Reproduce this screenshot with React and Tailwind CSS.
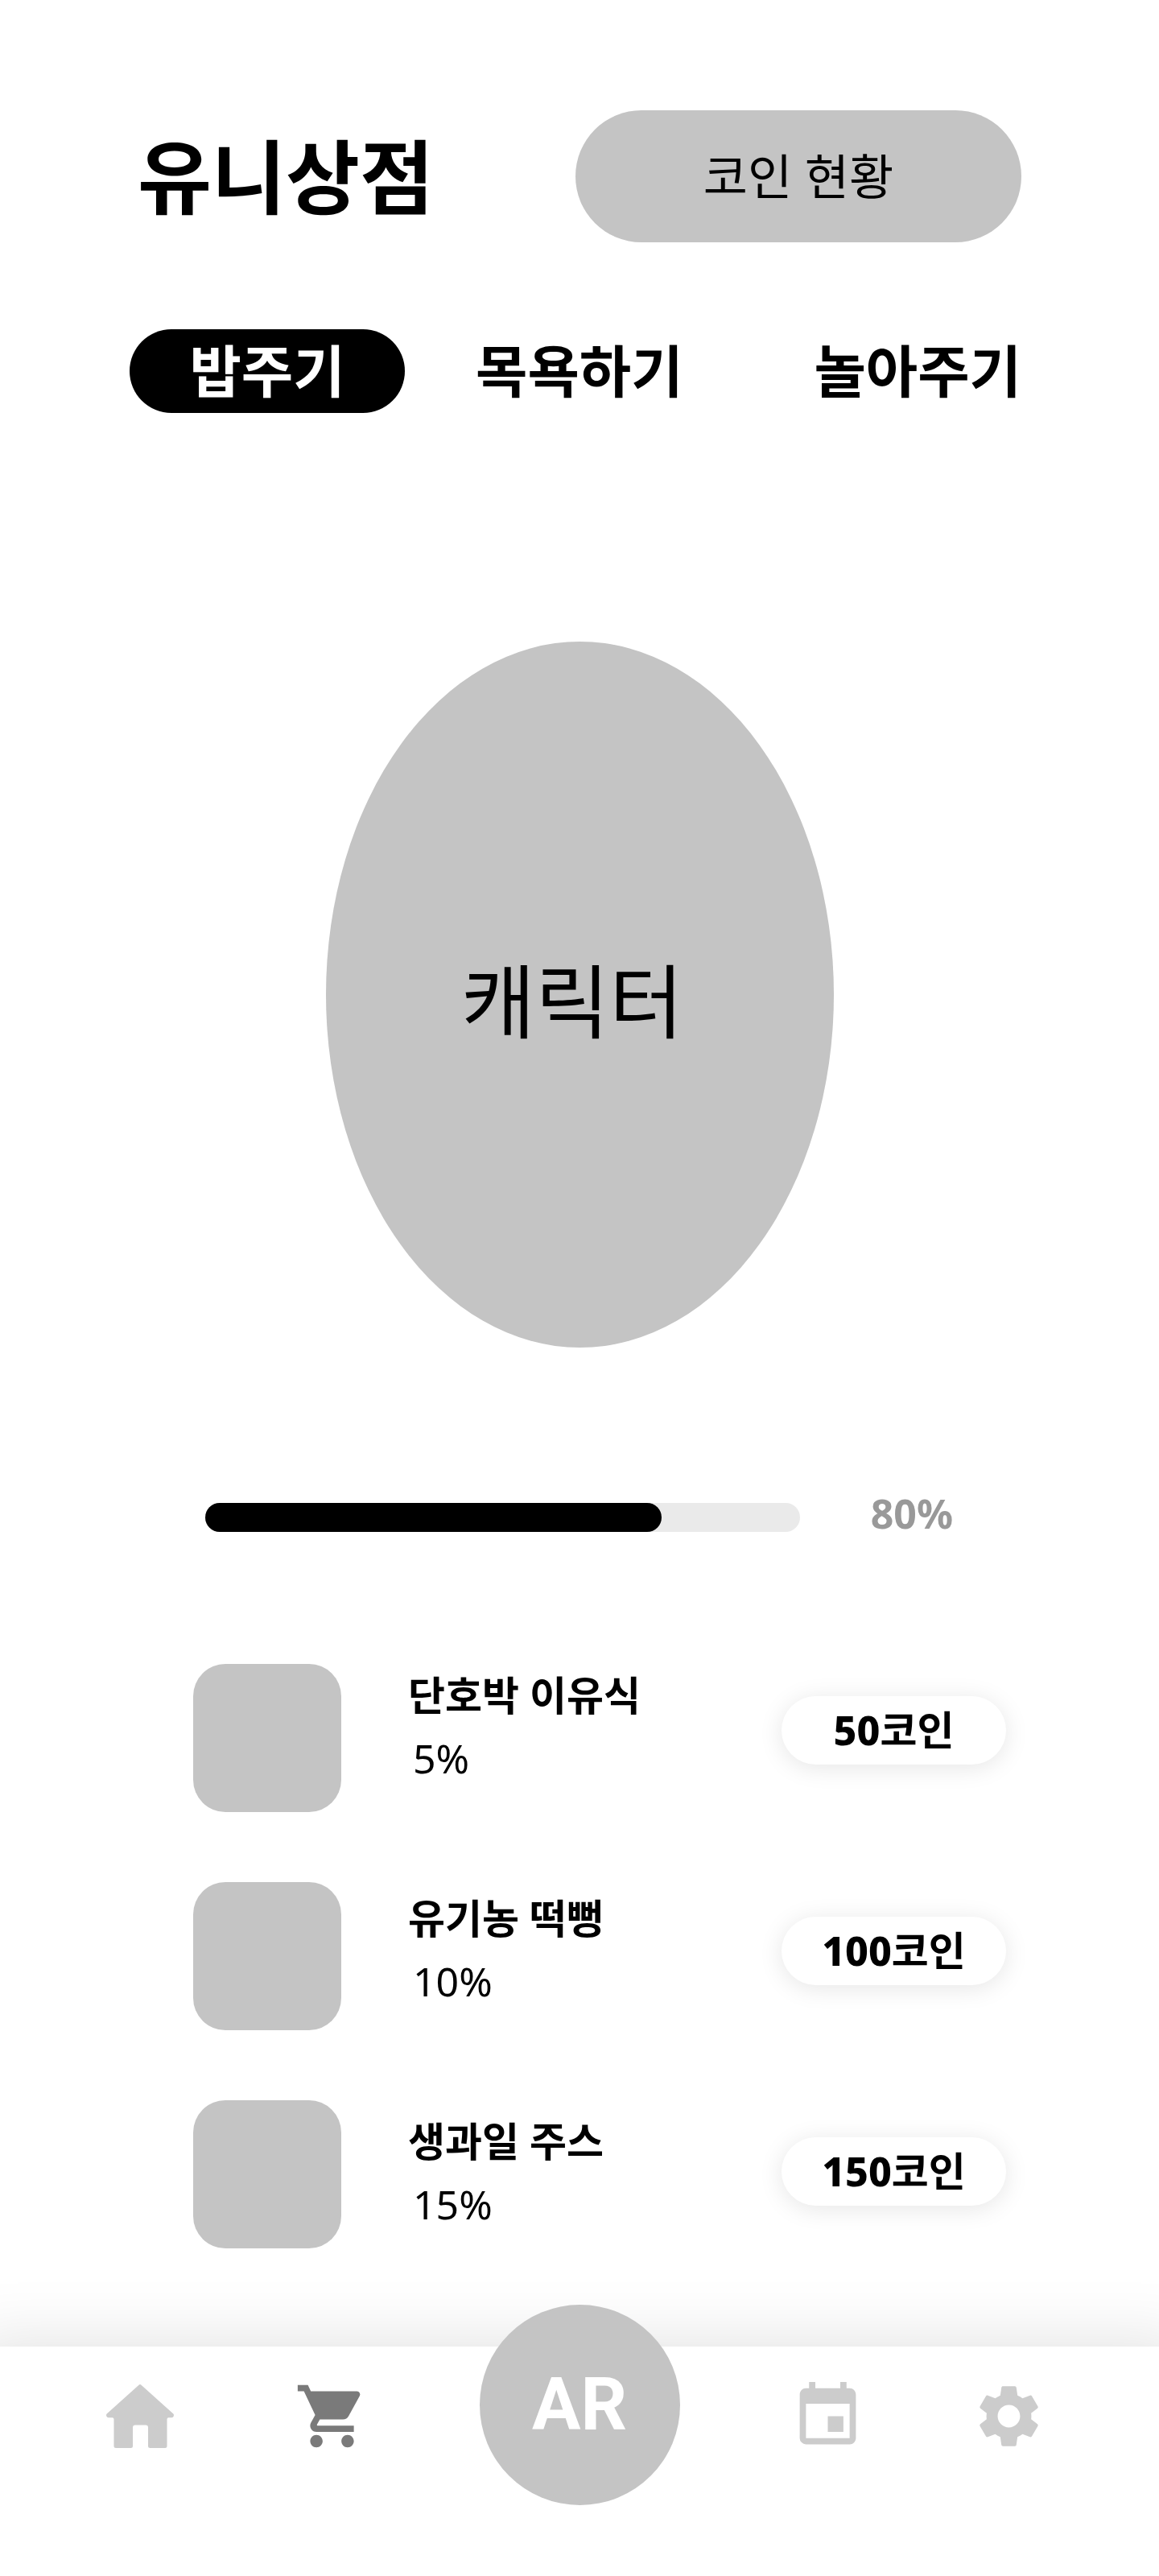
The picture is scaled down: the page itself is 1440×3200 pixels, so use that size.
import { MdShoppingCart, MdEvent, MdSettings } from "react-icons/md";

const items = [
  { name: "단호박 이유식", gain: "5%", price: "50" },
  { name: "유기농 떡뻥", gain: "10%", price: "100" },
  { name: "생과일 주스", gain: "15%", price: "150" },
];

function HomeIcon() {
  return (
    <svg viewBox="0 0 84 79" className="h-[79px] w-[84px]" fill="currentColor" aria-hidden="true">
      <path d="M40.5.7a2.2 2.2 0 0 1 3 0L83.300 36.500c1.500 1.500.400 4.800-2 4.800H77.500a2 2 0 0 0-2 2V76.500a2.500 2.500 0 0 1-2.500 2.500H54.500a2.500 2.500 0 0 1-2.500-2.500V53.500a3 3 0 0 0-3-3H36a3 3 0 0 0-3 3V76.500a2.500 2.500 0 0 1-2.500 2.500H12a2.500 2.500 0 0 1-2.500-2.500V43.300a2 2 0 0 0-2-2H2.700C.300 41.300-.800 38 .700 36.500z" />
    </svg>
  );
}

function NavLink({ href, label, active, children }) {
  return (
    <a
      href={href}
      aria-label={label}
      className={`flex size-[93px] items-center justify-center ${active ? "text-[#7a7a7a]" : "text-[#cccccc]"}`}
    >
      {children}
    </a>
  );
}

export default function App() {
  return (
    <div className="flex min-h-screen flex-col overflow-hidden bg-white font-['Noto_Sans','Noto_Sans_CJK_KR',sans-serif] text-black">
      <main className="flex grow flex-col">
        <header className="flex items-center justify-between px-[171px] pt-[137px]">
          <h1 className="text-[100px] leading-[140px] font-bold">유니상점</h1>
          <button className="h-[164px] w-[554px] rounded-full bg-[#c4c4c4] text-[60px]">코인 현황</button>
        </header>

        <nav className="mt-[108px] flex items-center pr-[171px] pl-[161px] text-[70px] leading-[104px] font-bold">
          <button className="w-[342px] rounded-full bg-black text-white">밥주기</button>
          <button className="ml-[88px]">목욕하기</button>
          <button className="ml-auto">놀아주기</button>
        </nav>

        <section className="mx-auto mt-[284px] flex h-[877px] w-[631px] items-center justify-center rounded-[50%] bg-[#c4c4c4] pt-[14px] pr-[18px] text-[100px]">
          캐릭터
        </section>

        <section className="mt-[193px] flex items-start justify-between pr-[256px] pl-[255px]">
          <div
            className="h-9 w-[739px] rounded-full bg-[#eaeaea]"
            role="progressbar"
            aria-valuenow={80}
            aria-label="포만감"
          >
            <div className="h-9 w-[567px] rounded-full bg-black" />
          </div>
          <span className="text-[50px] leading-[26px] font-bold text-[#999999]">80%</span>
        </section>

        <section className="mt-[164px] flex items-start pr-[190px] pl-[240px]">
          <div className="flex flex-col gap-[87px]">
            {items.map((item) => (
              <div key={item.name} className="size-[184px] rounded-[40px] bg-[#c4c4c4]" />
            ))}
          </div>
          <ul className="ml-[83px] flex grow flex-col gap-[121px] text-[50px] leading-[78px]">
            {items.map((item) => (
              <li key={item.name}>
                <h2 className="font-bold">{item.name}</h2>
                <p className="pl-1.5">{item.gain}</p>
              </li>
            ))}
          </ul>
          <div className="flex flex-col gap-[189px] pt-10">
            {items.map((item) => (
              <button
                key={item.name}
                className="h-[85px] w-[279px] rounded-full bg-white text-[50px] leading-[85px] font-bold shadow-[0_4px_30px_rgba(0,0,0,0.1)]"
              >
                <span className="font-extrabold">{item.price}</span>코인
              </button>
            ))}
          </div>
        </section>
      </main>

      <nav className="mt-[122px] grid h-[285px] grid-cols-[1fr_auto_1fr] items-start bg-white pt-10 shadow-[0_36px_80px_40px_rgba(0,0,0,0.12)]">
        <div className="flex justify-end gap-[145px] pr-[137px]">
          <NavLink href="#home" label="홈">
            <HomeIcon />
          </NavLink>
          <NavLink href="#shop" label="상점" active>
            <MdShoppingCart size={93} />
          </NavLink>
        </div>
        <a
          href="#ar"
          className="-mt-[92px] flex size-[249px] items-center justify-center rounded-full bg-[#c4c4c4] font-['Roboto',sans-serif] text-[90px] font-bold text-white"
        >
          AR
        </a>
        <div className="flex gap-[132px] pl-[137px]">
          <NavLink href="#calendar" label="일정">
            <MdEvent size={93} />
          </NavLink>
          <NavLink href="#settings" label="설정">
            <MdSettings size={93} />
          </NavLink>
        </div>
      </nav>
    </div>
  );
}
